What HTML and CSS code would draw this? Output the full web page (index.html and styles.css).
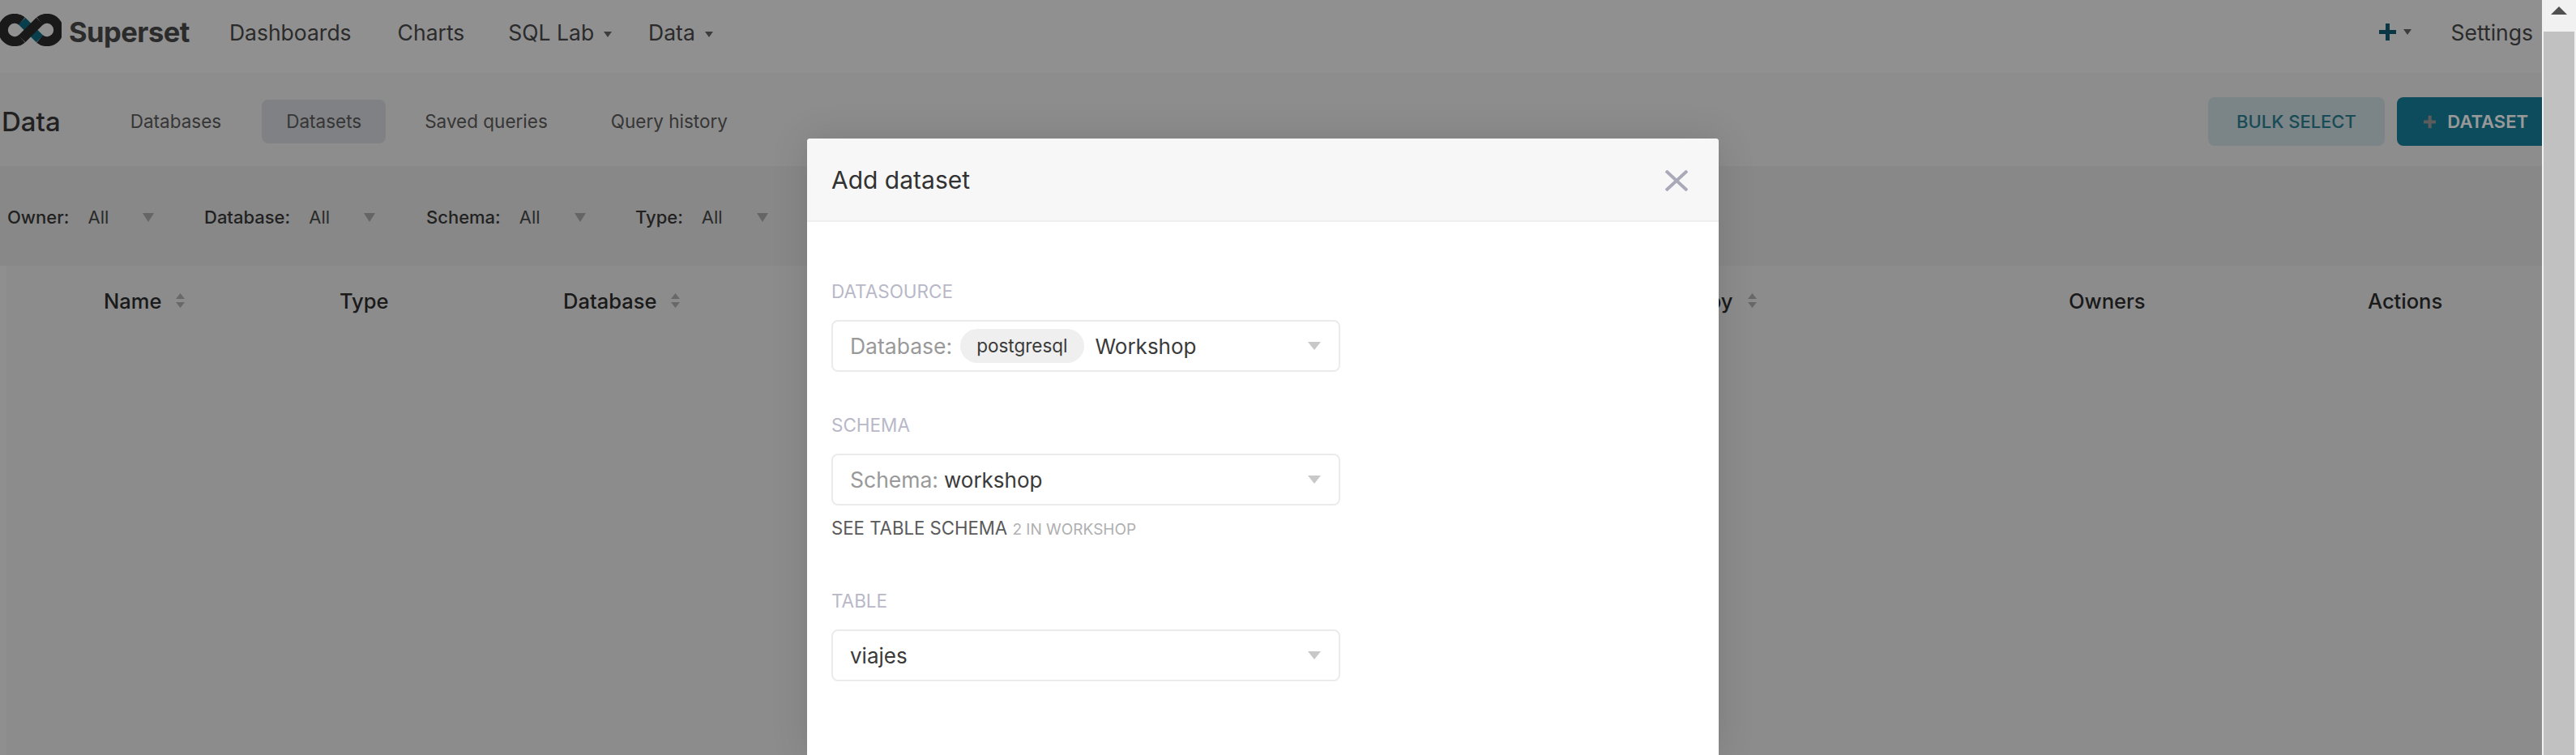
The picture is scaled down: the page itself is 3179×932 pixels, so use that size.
FILE: index.html
```html
<!DOCTYPE html>
<html lang="en">
<head>
<meta charset="UTF-8">
<meta name="viewport" content="width=device-width, initial-scale=1.0">
<title>Datasets</title>
<link rel="stylesheet" href="styles.css">
</head>
<body>

<div class="viewport">
  <div class="page">

    <nav class="topNav">
      <svg class="logo" width="76" height="40" viewBox="0 16 76 40" aria-hidden="true">
        <g fill="none" stroke-width="12">
          <path stroke="#2b2b2b" d="M27 25A14.2 14.2 0 1 0 27 47M49 25A14.2 14.2 0 1 1 49 47"/>
          <path stroke="#0f6a80" d="M27 25L49 47"/>
          <path stroke="#2b2b2b" d="M27 47L49 25"/>
        </g>
      </svg>
      <span class="brand">Superset</span>
      <a class="navLink navDashboards">Dashboards</a>
      <a class="navLink navCharts">Charts</a>
      <a class="navLink navSql">SQL Lab<i class="caret navCaret"></i></a>
      <a class="navLink navData">Data<i class="caret navCaret"></i></a>
      <div class="navRight">
        <svg class="navPlus" width="21" height="21" viewBox="0 0 21 21" aria-hidden="true"><path fill="#0f5c70" d="M8 0h5v8h8v5h-8v8H8v-8H0V8h8z"/></svg>
        <i class="caret navCaret"></i>
        <a class="navLink navSettings">Settings</a>
      </div>
    </nav>

    <div class="subNav">
      <h1 class="pageTitle">Data</h1>
      <a class="tab tabFirst">Databases</a>
      <a class="tab tabActive">Datasets</a>
      <a class="tab">Saved queries</a>
      <a class="tab">Query history</a>
      <div class="subActions">
        <button class="btn btnLight">BULK SELECT</button>
        <button class="btn btnPrimary"><svg class="btnPlus" width="19" height="19" viewBox="0 0 19 19" aria-hidden="true"><path fill="#9a9a9a" d="M7 0h5v7h7v5h-7v7H7v-7H0V7h7z"/></svg>DATASET</button>
      </div>
    </div>

    <div class="filterBar">
      <div class="filter"><b>Owner:</b><span>All</span><i class="caret filterCaret"></i></div>
      <div class="filter"><b>Database:</b><span>All</span><i class="caret filterCaret"></i></div>
      <div class="filter"><b>Schema:</b><span>All</span><i class="caret filterCaret"></i></div>
      <div class="filter"><b>Type:</b><span>All</span><i class="caret filterCaret"></i></div>
    </div>

    <div class="listTable">
      <div class="listHead">
        <div>Name<svg class="sort" width="11" height="18" viewBox="0 0 11 18" aria-hidden="true"><path d="M5.5 0L11 7H0zM5.5 18L0 11h11z"/></svg></div>
        <div>Type</div>
        <div>Database<svg class="sort" width="11" height="18" viewBox="0 0 11 18" aria-hidden="true"><path d="M5.5 0L11 7H0zM5.5 18L0 11h11z"/></svg></div>
        <div>Modified by<svg class="sort" width="11" height="18" viewBox="0 0 11 18" aria-hidden="true"><path d="M5.5 0L11 7H0zM5.5 18L0 11h11z"/></svg></div>
        <div>Owners</div>
        <div>Actions</div>
      </div>
    </div>

  </div>

  <div class="backdrop"></div>

  <div class="modal">
    <div class="modalHeader">
      <h2 class="modalTitle">Add dataset</h2>
      <svg class="modalClose" width="28" height="26" viewBox="0 0 28 26" aria-hidden="true"><path fill="none" stroke="#a9a9b8" stroke-width="4" d="M1 1L27 25M27 1L1 25"/></svg>
    </div>
    <div class="modalBody">
      <div class="field">
        <label class="fieldLabel">DATASOURCE</label>
        <div class="select">
          <span class="selectPrefix">Database:</span>
          <span class="pill">postgresql</span>
          <span class="selectValue">Workshop</span>
          <i class="caret selectCaret"></i>
        </div>
      </div>
      <div class="field">
        <label class="fieldLabel">SCHEMA</label>
        <div class="select">
          <span class="selectPrefix">Schema:</span>
          <span class="selectValue schemaValue">workshop</span>
          <i class="caret selectCaret"></i>
        </div>
        <div class="schemaHint">SEE TABLE SCHEMA <small>2 IN WORKSHOP</small></div>
      </div>
      <div class="field">
        <label class="fieldLabel">TABLE</label>
        <div class="select">
          <span class="selectValue">viajes</span>
          <i class="caret selectCaret"></i>
        </div>
      </div>
    </div>
  </div>
</div>

<div class="scrollbar">
  <div class="scrollArrow"></div>
  <div class="scrollThumb"></div>
</div>

</body>
</html>
```

FILE: styles.css
```css
* {
  box-sizing: border-box;
}
body {
  margin: 0;
  height: 100vh;
  display: flex;
  overflow: hidden;
  font-family: Inter, "Liberation Sans", sans-serif;
  color: #484848;
  background-color: #eee;
}
.viewport {
  position: relative;
  flex: 1;
  min-width: 0;
  overflow: hidden;
}
.page {
  width: 3170px;
  height: 100%;
}

/* top nav */
.topNav {
  height: 92px;
  padding-bottom: 11px;
  display: flex;
  align-items: center;
  background-color: #f0f0f0;
  border-bottom: 2px solid #e9e9e9;
}
.logo {
  flex: none;
  margin-bottom: 6px;
}
.brand {
  margin-left: 9px;
  font-size: 34.5px;
  font-weight: 700;
  letter-spacing: -0.5px;
  color: #484848;
}
.navLink {
  font-size: 26.5px;
  color: #484848;
  white-space: nowrap;
}
.navDashboards {
  margin-left: 49px;
}
.navCharts {
  margin-left: 57px;
}
.navSql {
  margin-left: 54px;
}
.navData {
  margin-left: 45px;
}
.navRight {
  margin-left: auto;
  padding-right: 44px;
  display: flex;
  align-items: center;
}
.navRight .navCaret {
  margin-left: 9px;
}
.navSettings {
  margin-left: 49px;
}
.caret {
  display: inline-block;
  width: 0;
  height: 0;
  border-style: solid;
  border-color: #8a8a8a transparent transparent;
}
.navCaret {
  margin-left: 12px;
  border-width: 7px 5px 0;
  border-top-color: #666;
  vertical-align: middle;
}

/* sub nav */
.subNav {
  height: 113px;
  padding-top: 3px;
  padding-right: 15px;
  display: flex;
  align-items: center;
  background-color: #ececec;
}
.pageTitle {
  margin: 0 0 0 2px;
  font-size: 33px;
  font-weight: 500;
  color: #383838;
}
.tab {
  margin-right: 18px;
  padding: 14px 30px;
  height: 54px;
  font-size: 22.5px;
  line-height: 26px;
  color: #5a5a5a;
  border-radius: 8px;
}
.tabFirst {
  margin-left: 56px;
  margin-right: 20px;
}
.tabActive {
  background-color: #d6d8dc;
}
.subActions {
  margin-left: auto;
  display: flex;
  gap: 15px;
}
.btn {
  height: 60px;
  padding: 0 35px;
  display: flex;
  align-items: center;
  border: none;
  border-radius: 8px;
  font-family: Inter, "Liberation Sans", sans-serif;
  font-size: 22px;
  font-weight: 500;
}
.btnLight {
  width: 218px;
  background-color: #cddcdf;
  color: #2a7d92;
}
.btnPrimary {
  width: 197px;
  padding-left: 33px;
  background-color: #147f9a;
  color: #fff;
  font-weight: 600;
}
.btnPlus {
  margin-right: 14px;
}

/* filters */
.filterBar {
  height: 123px;
  padding: 3px 0 0 9px;
  display: flex;
  align-items: center;
  background-color: #e3e3e3;
}
.filter {
  width: 274px;
  display: flex;
  align-items: center;
  font-size: 22px;
  color: #484848;
}
.filter:first-child {
  width: 243px;
}
.filter:nth-child(3) {
  width: 258px;
}
.filter b {
  font-weight: 500;
  color: #383838;
}
.filter span {
  margin-left: 23px;
  width: 68px;
}
.filterCaret {
  border-width: 11px 7px 0;
  border-top-color: #a8a8a8;
}

/* table */
.listTable {
  margin-left: 8px;
  height: 100%;
  background-color: #e9e9e9;
}
.listHead {
  height: 86px;
  padding-left: 120px;
  display: grid;
  grid-template-columns: 291px 276px 1299px 559px 369px 1fr;
  align-items: center;
  font-size: 25.5px;
  font-weight: 500;
  color: #2c2c2c;
}
.listHead div {
  display: flex;
  align-items: center;
  white-space: nowrap;
}
.sort {
  margin-left: 18px;
  fill: #aeaeae;
}

/* dimmed layer and modal */
.backdrop {
  position: absolute;
  top: 0;
  right: 0;
  bottom: 0;
  left: 0;
  background-color: rgba(0, 0, 0, 0.4);
}
.modal {
  position: absolute;
  top: 171px;
  left: 996px;
  bottom: 0;
  width: 1125px;
  background-color: #fff;
  border-radius: 4px 4px 0 0;
  box-shadow: 0 0 48px rgba(0, 0, 0, 0.12);
}
.modalHeader {
  height: 103px;
  padding: 0 38px 0 30px;
  display: flex;
  align-items: center;
  justify-content: space-between;
  background-color: #f7f7f7;
  border-bottom: 2px solid #efefef;
  border-radius: 4px 4px 0 0;
}
.modalTitle {
  margin: 0;
  font-size: 30px;
  font-weight: 400;
  color: #323232;
}
.modalClose {
  margin-top: 2px;
}
.modalBody {
  padding: 72px 30px 0;
}
.field {
  margin-bottom: 52px;
}
.fieldLabel {
  display: block;
  height: 28px;
  margin-bottom: 21px;
  font-size: 22.5px;
  line-height: 28px;
  color: #b8b8c8;
}
.select {
  width: 628px;
  height: 64px;
  padding: 0 22px 0 21px;
  display: flex;
  align-items: center;
  border: 2px solid #ebebeb;
  border-radius: 8px;
  font-size: 26.5px;
  color: #3a3a3a;
}
.selectPrefix {
  color: #999;
}
.selectValue {
  font-size: 26px;
}
.pill {
  margin: 0 14px 0 10px;
  padding: 0 20px;
  height: 42px;
  font-size: 22.5px;
  line-height: 42px;
  background-color: #efefef;
  border-radius: 21px;
}
.schemaValue {
  margin-left: 7px;
}
.selectCaret {
  margin-left: auto;
  border-width: 10px 8px 0;
  border-top-color: #c8c8c8;
}
.schemaHint {
  margin-top: 14px;
  padding-bottom: 11px;
  height: 38px;
  font-size: 22.2px;
  line-height: 27px;
  color: #5a5a5a;
}
.schemaHint small {
  font-size: 19px;
  color: #b0b0b0;
}

/* scrollbar strip */
.scrollbar {
  flex: none;
  width: 42px;
  padding: 8px 2px 0;
  background-color: #f1f1f1;
}
.scrollArrow {
  width: 0;
  height: 0;
  margin: 0 auto 21px;
  border-style: solid;
  border-width: 0 10px 10px;
  border-color: transparent transparent #505050;
}
.scrollThumb {
  height: 100%;
  background-color: #c1c1c1;
}
```
